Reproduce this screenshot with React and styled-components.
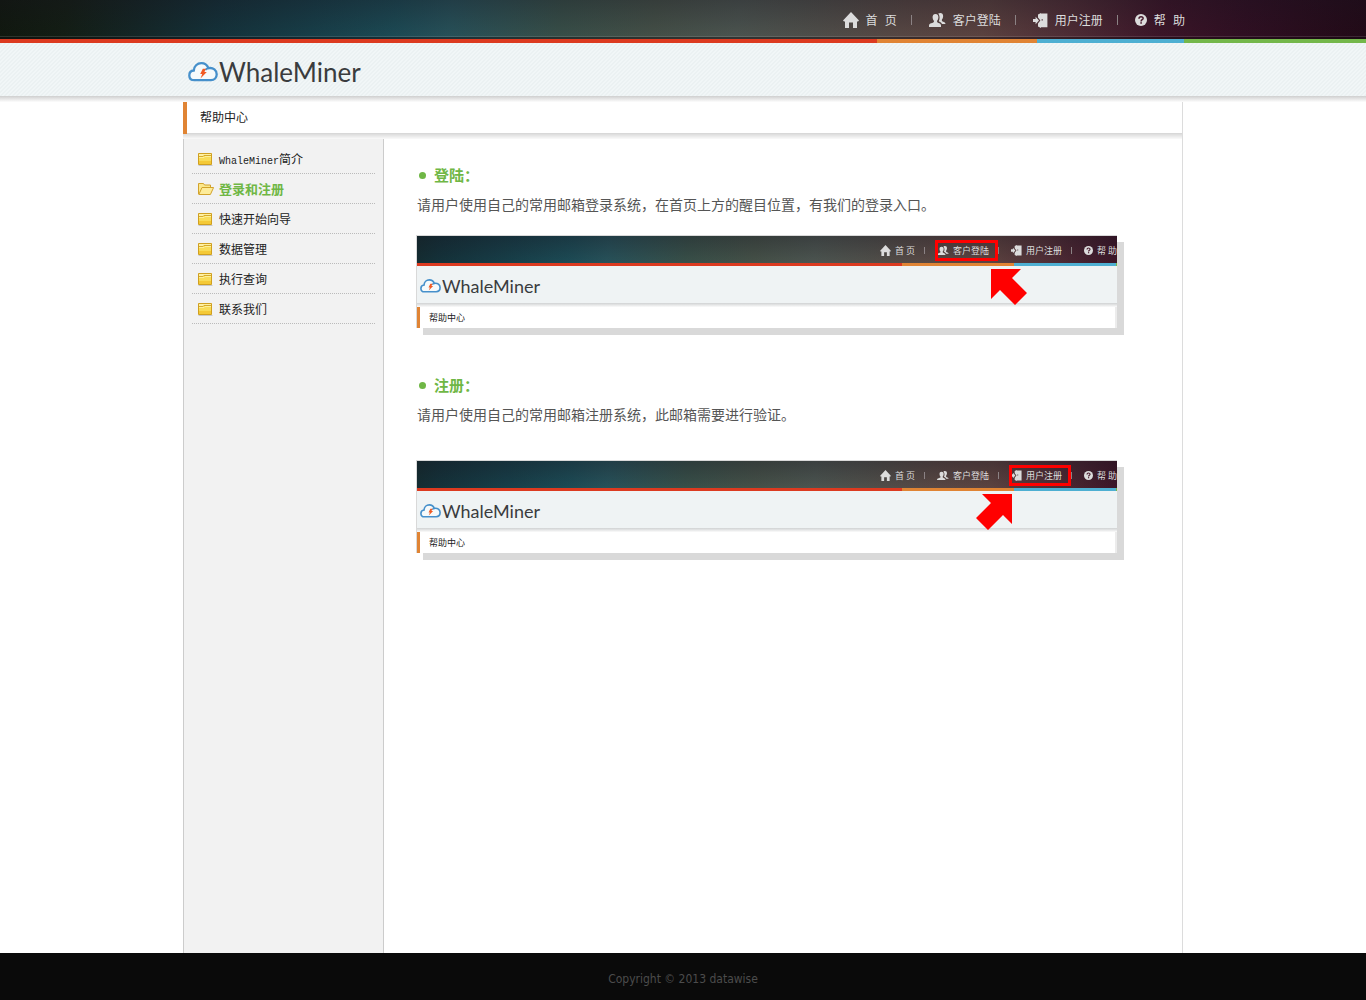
import React from "react";
import styled, { createGlobalStyle, css } from "styled-components";

const zhMono = `"Liberation Mono", "Noto Sans CJK SC", monospace`;
const zhBody = `"Noto Sans CJK SC", sans-serif`;

const darkBar = css`
  background-image:
    linear-gradient(180deg, rgba(22, 18, 30, 0.32), rgba(22, 18, 30, 0)),
    linear-gradient(
      100deg,
      #10180e 0%,
      #131e14 5%,
      #142625 10%,
      #14323a 16%,
      #173f49 23%,
      #1c4b55 29%,
      #27525a 33%,
      #385049 41%,
      #455148 48%,
      #4c5550 54%,
      #504f4a 60%,
      #584844 66%,
      #5c4340 72%,
      #502e36 78%,
      #3c1528 85%,
      #300f22 91%,
      #220a17 100%
    );
`;

const GlobalStyle = createGlobalStyle`
  * { box-sizing: border-box; }
  body {
    margin: 0;
    background: #fff;
    color: #333;
    font-family: ${zhBody};
    font-size: 12px;
  }
  a { color: inherit; text-decoration: none; }
  h1, h2, p, ul, figure { margin: 0; padding: 0; }
  svg { display: block; flex: none; }
`;

const Page = styled.div`
  min-height: 100vh;
  display: flex;
  flex-direction: column;
`;

const TopBar = styled.header`
  ${darkBar}
  background-origin: border-box;
  border-bottom: 2px solid rgba(20, 10, 16, 0.45);
  box-shadow: inset 0 -1px 0 rgba(255, 255, 255, 0.12);
`;

const TopInner = styled.div`
  max-width: 1004px;
  height: 37px;
  margin: 0 auto;
  padding-top: 3px;
  display: flex;
  align-items: center;
  justify-content: flex-end;
`;

const Nav = styled.nav`
  display: flex;
  align-items: center;
  color: #dcdcdc;
  font: 12px/16px ${zhMono};
`;

const NavLink = styled.a`
  display: flex;
  align-items: center;
  gap: 7px;
  white-space: nowrap;
`;

const NavLabel = styled.span`
  padding-top: 4px;
`;

const Divider = styled.span`
  width: 1px;
  height: ${(p) => (p.$small ? 7 : 10)}px;
  margin: ${(p) => (p.$small ? "0 12px 0 9px" : "0 17px 0 14px")};
  background: #8b8284;
`;

const Stripe = styled.div`
  display: grid;
  height: ${(p) => p.$height}px;
  grid-template-columns: ${(p) => p.$columns};
`;

const Swatch = styled.span`
  background: ${(p) => p.$color};
`;

const LogoBar = styled.div`
  height: 53px;
  background: #eff4f5 linear-gradient(135deg, #ebf1f2 25%, #f1f6f7 25% 50%, #ebf1f2 50% 75%, #f1f6f7 75%) 0 0 / 4px 4px;
`;

const HeaderShade = styled.div`
  height: 6px;
  background: linear-gradient(#cfcfcf, #fdfdfd);
`;

const LogoInner = styled.div`
  max-width: 1000px;
  height: 100%;
  margin: 0 auto;
  padding: 4px 5px 0;
  display: flex;
  align-items: center;
`;

const LogoLink = styled.a`
  display: flex;
  align-items: center;
  gap: 1px;
`;

const LogoText = styled.span`
  font-family: Lato, sans-serif;
  font-size: ${(p) => p.$size}px;
  line-height: 1;
  color: #3a3c3e;
`;

const Main = styled.main`
  flex: 1;
  width: 100%;
  max-width: 1000px;
  margin: 0 auto;
  display: flex;
  flex-direction: column;
  border-right: 1px solid #dcdcdc;
`;

const Title = styled.h1`
  height: 32px;
  padding-left: 13px;
  border-left: 4px solid #e08434;
  font: 12px/30px ${zhBody};
  color: #222;
  box-shadow: inset 0 -1px 0 #d8d8d8;
`;

const TitleShade = styled.div`
  height: 5px;
  background: linear-gradient(#dcdcdc, #fafafa);
`;

const Columns = styled.div`
  flex: 1;
  display: flex;
`;

const Sidebar = styled.aside`
  flex: none;
  width: 201px;
  padding: 5px 8px;
  background: #f2f2f2;
  border: solid #ccc;
  border-width: 0 1px;
`;

const Menu = styled.ul`
  list-style: none;
`;

const MenuItem = styled.li`
  height: 30px;
  border-bottom: 1px dotted #bbb;
`;

const MenuLink = styled.a`
  height: 29px;
  padding-left: 6px;
  display: flex;
  align-items: center;
  gap: 5px;
  font-size: ${(p) => (p.$active ? 13 : 12)}px;
  line-height: 18px;
  font-weight: ${(p) => (p.$active ? 700 : 400)};
  color: ${(p) => (p.$active ? "#6fb745" : "#222")};
`;

const MenuLabel = styled.span`
  display: flex;
  align-items: baseline;
`;

const Latin = styled.span`
  font-family: "Liberation Mono", monospace;
  font-size: 10px;
  line-height: 12px;
`;

const Content = styled.div`
  flex: 1;
  min-width: 0;
  padding: 21px 32px 42px;
  display: flex;
  flex-direction: column;
  gap: 42px;
`;

const Heading = styled.h2`
  display: flex;
  align-items: center;
  gap: 8px;
  padding-left: 3px;
  font: 700 15px/30px ${zhBody};
  color: #6fb745;
  &::before {
    content: "";
    width: 7px;
    height: 7px;
    border-radius: 50%;
    background: #6fb745;
  }
`;

const Text = styled.p`
  padding-left: 1px;
  font-size: 14px;
  line-height: 28px;
  color: #555;
`;

const Shot = styled.figure`
  max-width: 701px;
  height: 93px;
  margin-top: ${(p) => p.$gap}px;
  border: solid #d9d9d9;
  border-width: 1px 0 0 1px;
  box-shadow: 7px 7px 0 #d9d9d9;
`;

const ShotBar = styled.div`
  ${darkBar}
  background-size: 140% 100%;
  background-position: 47% 0;
  height: 27px;
  display: flex;
  align-items: center;
  justify-content: flex-end;
`;

const ShotNav = styled.div`
  display: flex;
  align-items: center;
  padding-top: 2px;
  color: #dcdcdc;
  font: 9px/12px ${zhBody};
`;

const ShotLink = styled.span`
  position: relative;
  display: flex;
  align-items: center;
  gap: 4px;
  white-space: nowrap;
`;

const ShotLogo = styled.div`
  height: 37px;
  padding: 2px 3px 0;
  display: flex;
  align-items: center;
  gap: 1px;
  background: #eff3f4;
`;

const ShotShade = styled.div`
  height: 4px;
  background: linear-gradient(#d0d2d3, #fbfbfb);
`;

const ShotTitle = styled.div`
  height: 21px;
  padding-left: 9px;
  border-left: 3px solid #e08434;
  border-right: 2px solid #ececec;
  background: #fff;
  font-size: 9px;
  line-height: 21px;
  color: #222;
`;

const Marker = styled.span`
  position: absolute;
  top: -5px;
  left: -2px;
  right: -9px;
  height: 21px;
  border: 3px solid #f00;
`;

const Pointer = styled.svg`
  position: absolute;
  top: 24px;
  left: ${(p) => (p.$mirrored ? -35 : 54)}px;
`;

const Footer = styled.footer`
  height: 47px;
  padding-top: 5px;
  background: #0a0a0a;
  color: #4c4c4c;
  font: 12px/42px "DejaVu Sans Condensed", "DejaVu Sans", sans-serif;
  text-align: center;
`;

function HomeIcon({ size }) {
  return (
    <svg width={size} height={size} viewBox="0 0 16 16" fill="currentColor" aria-hidden="true">
      <path d="M8 0L16 8.6L15 9.6H14V16H10V10.6H6V16H2V9.6H1L0 8.6Z" />
    </svg>
  );
}

function UsersIcon({ size }) {
  return (
    <svg width={size} height={(size * 14) / 17} viewBox="0 0 17 14" fill="currentColor" aria-hidden="true">
      <path d="M6.5 1C8.6 1 9.6 2.5 9.4 4.6C9.3 6.2 8.6 7.2 8.1 7.8V9C8.6 10 12 10.2 12 12.4V14H0V12.4C0 10.2 4.3 10 4.9 9V7.8C4.3 7.2 3.7 6.2 3.6 4.6C3.4 2.5 4.4 1 6.5 1Z" />
      <path d="M9.2 0.6C12.3-.8 14.4.8 14.1 3.6C14 5.2 13.4 6 12.9 6.6V8C13.5 9 16.4 8.8 16.5 11H13C12.4 9.4 10.6 9 9.8 8.3C10.9 6 11 3 9.2.6Z" />
    </svg>
  );
}

function DoorIcon({ size }) {
  return (
    <svg width={size} height={size} viewBox="0 0 15 15" fill="currentColor" aria-hidden="true">
      <path d="M0 5.9H2.6V3.8L6 7.5L2.6 11.2V9.1H0Z" />
      <path
        fillRule="evenodd"
        d="M5 1.4L8 0V.6H14.4V14.2H8V15L5 13.6V10.4L7.4 7.5L5 4.6ZM8.6 6.2H9.8V7.4H8.6Z"
      />
    </svg>
  );
}

function HelpIcon({ size }) {
  return (
    <svg width={size} height={size} viewBox="0 0 12 12" aria-hidden="true">
      <circle cx="6" cy="6" r="6" fill="currentColor" />
      <path d="M4 4.7C4 2 8.2 2.1 8.1 4.4C8 5.8 6.1 5.7 6.1 7.4" fill="none" stroke="#471a2c" strokeWidth="1.5" />
      <rect x="5.3" y="8.2" width="1.6" height="1.5" fill="#471a2c" />
    </svg>
  );
}

function Cloud({ width }) {
  return (
    <svg width={width} height={(width * 2) / 3} viewBox="0 0 30 20" aria-hidden="true">
      <path
        d="M6.4 18.2C3.2 18.2 1.3 16.2 1.3 13.4C1.3 10.6 3.3 8.7 5.8 8.5C5.9 4.2 9.3 1.2 13.3 1.2C16.8 1.2 19.3 3.2 20.4 6.2C25.3 5.2 28.7 8.5 28.7 12.3C28.7 15.8 26.4 18.2 23 18.2Z"
        fill="#f6fafb"
        stroke="#4690cb"
        strokeWidth="2.3"
      />
      <path d="M20.6 6.1C19.3 6.4 18.2 7 17.4 7.9" fill="none" stroke="#4690cb" strokeWidth="1.8" />
      <path d="M14.8 6.8L18 6.8L16.4 10H18.8L12.5 16.6L14.2 12H12.2Z" fill="#f15a24" />
    </svg>
  );
}

function Folder({ open }) {
  return open ? (
    <svg width="16" height="14" viewBox="0 0 16 14" aria-hidden="true">
      <path d="M0.5 12V1.5H5.5L6.5 3H12.5V5.5" fill="#fbe88c" stroke="#d2a32c" />
      <path d="M0.8 12.5L4 5.5H15.6L12.4 12.5Z" fill="#fdec9a" stroke="#d2a32c" />
    </svg>
  ) : (
    <svg width="16" height="14" viewBox="0 0 16 14" aria-hidden="true">
      <path d="M0.5 13.5H14.5" stroke="#c9c9c9" />
      <path d="M0.5 1.5H13.5V12.5H0.5Z" fill="#f8dc58" stroke="#d0a020" />
      <path d="M1 2H13V3H6L5 4H1Z" fill="#fdf0a4" />
      <path d="M1 4.5H5L6 3.5H13" fill="none" stroke="#d8ab2c" />
      <path d="M1 5.5H6L7 4.5H13" fill="none" stroke="#fcf09a" />
      <path d="M1 9H13V12H1Z" fill="#f4c936" />
    </svg>
  );
}

const navItems = [
  { label: "首 页", Icon: HomeIcon, size: 16, small: 11 },
  { label: "客户登陆", Icon: UsersIcon, size: 17, small: 12 },
  { label: "用户注册", Icon: DoorIcon, size: 15, small: 11 },
  { label: "帮 助", Icon: HelpIcon, size: 12, small: 9 },
];

const menuItems = [
  { latin: "WhaleMiner", label: "简介" },
  { label: "登录和注册", active: true },
  { label: "快速开始向导" },
  { label: "数据管理" },
  { label: "执行查询" },
  { label: "联系我们" },
];

const stripeColors = ["#dc3a20", "#e08434", "#4eafd2", "#74b74a"];

function ColorStripe({ height, columns }) {
  return (
    <Stripe $height={height} $columns={columns}>
      {stripeColors.map((c) => (
        <Swatch key={c} $color={c} />
      ))}
    </Stripe>
  );
}

function Screenshot({ marked, mirrored, gap }) {
  return (
    <Shot $gap={gap}>
      <ShotBar>
        <ShotNav>
          {navItems.map(({ label, Icon, small }, i) => (
            <React.Fragment key={label}>
              {i > 0 && <Divider $small />}
              <ShotLink>
                <Icon size={small} />
                {label}
                {marked === label && (
                  <>
                    <Marker />
                    <Pointer $mirrored={mirrored} width="36" height="36" viewBox="0 0 36 36" aria-hidden="true">
                      <path
                        d={
                          mirrored
                            ? "M6 0H36V30L27 21L12 36L0 24L15 9Z"
                            : "M0 0H30L21 9L36 24L24 36L9 21L0 30Z"
                        }
                        fill="#f00"
                      />
                    </Pointer>
                  </>
                )}
              </ShotLink>
            </React.Fragment>
          ))}
        </ShotNav>
      </ShotBar>
      <ColorStripe height={3} columns="485fr 112fr 102fr 1fr" />
      <ShotLogo>
        <Cloud width={21} />
        <LogoText $size={18}>WhaleMiner</LogoText>
      </ShotLogo>
      <ShotShade />
      <ShotTitle>帮助中心</ShotTitle>
    </Shot>
  );
}

export default function App() {
  return (
    <Page>
      <GlobalStyle />
      <TopBar>
        <TopInner>
          <Nav>
            {navItems.map(({ label, Icon, size }, i) => (
              <React.Fragment key={label}>
                {i > 0 && <Divider />}
                <NavLink href="#">
                  <Icon size={size} />
                  <NavLabel>{label}</NavLabel>
                </NavLink>
              </React.Fragment>
            ))}
          </Nav>
        </TopInner>
      </TopBar>
      <ColorStripe height={4} columns="877fr 160fr 147fr 182fr" />
      <LogoBar>
        <LogoInner>
          <LogoLink href="#">
            <Cloud width={30} />
            <LogoText $size={26}>WhaleMiner</LogoText>
          </LogoLink>
        </LogoInner>
      </LogoBar>
      <HeaderShade />
      <Main>
        <Title>帮助中心</Title>
        <TitleShade />
        <Columns>
          <Sidebar>
            <Menu>
              {menuItems.map(({ latin, label, active }) => (
                <MenuItem key={label}>
                  <MenuLink href="#" $active={active}>
                    <Folder open={active} />
                    <MenuLabel>
                      {latin && <Latin>{latin}</Latin>}
                      {label}
                    </MenuLabel>
                  </MenuLink>
                </MenuItem>
              ))}
            </Menu>
          </Sidebar>
          <Content>
            <section>
              <Heading>登陆：</Heading>
              <Text>请用户使用自己的常用邮箱登录系统，在首页上方的醒目位置，有我们的登录入口。</Text>
              <Screenshot marked="客户登陆" gap={17} />
            </section>
            <section>
              <Heading>注册：</Heading>
              <Text>请用户使用自己的常用邮箱注册系统，此邮箱需要进行验证。</Text>
              <Screenshot marked="用户注册" mirrored gap={32} />
            </section>
          </Content>
        </Columns>
      </Main>
      <Footer>Copyright © 2013 datawise</Footer>
    </Page>
  );
}
